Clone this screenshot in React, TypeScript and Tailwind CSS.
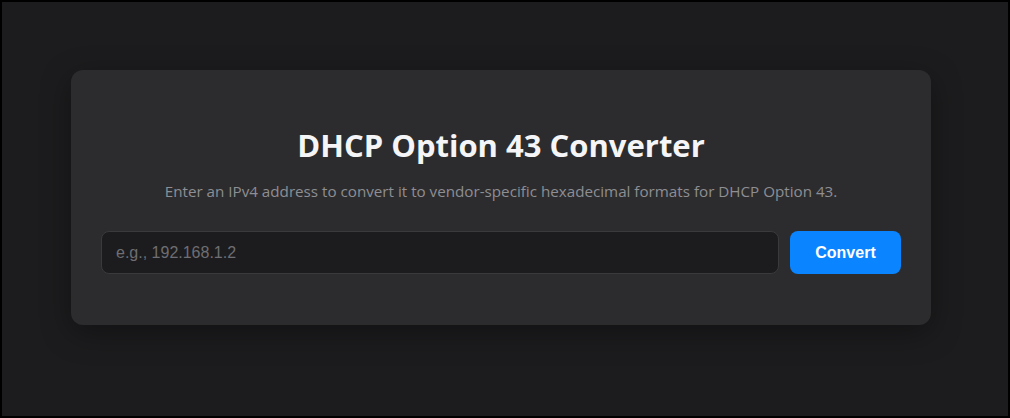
export default function App() {
  return (
    <div className="w-[1010px] h-[418px] border-2 border-black bg-[#1c1c1e] box-border pt-[68px] pl-[69px]">
      <div
        className="w-[860px] h-[255px] rounded-[12px] bg-[#2c2c2e] shadow-[0_8px_30px_rgba(0,0,0,0.35)] px-[30px] pt-[55px] box-border"
        style={{ fontFamily: '"Open Sans", "Noto Sans", sans-serif' }}
      >
        <h1 className="text-center text-[31px] leading-[40px] font-bold text-[#f5f5f7]">
          DHCP Option 43 Converter
        </h1>
        <p className="text-center text-[15.2px] leading-[20px] text-[#8e8e93] mt-[16px]">
          Enter an IPv4 address to convert it to vendor-specific hexadecimal formats for DHCP Option 43.
        </p>
        <div className="flex gap-[11px] mt-[30px]">
          <input
            type="text"
            placeholder="e.g., 192.168.1.2"
            className="flex-1 h-[43px] rounded-[8px] bg-[#1c1c1e] border border-[#3a3a3c] px-[14px] text-[16px] text-white placeholder:text-[#6e6e73] outline-none"
            style={{ fontFamily: '"Liberation Sans", Arial, sans-serif' }}
          />
          <button
            className="w-[111px] h-[43px] rounded-[8px] bg-[#0a84ff] text-white text-[16px] font-bold"
            style={{ fontFamily: '"Liberation Sans", Arial, sans-serif' }}
          >
            Convert
          </button>
        </div>
      </div>
    </div>
  );
}
